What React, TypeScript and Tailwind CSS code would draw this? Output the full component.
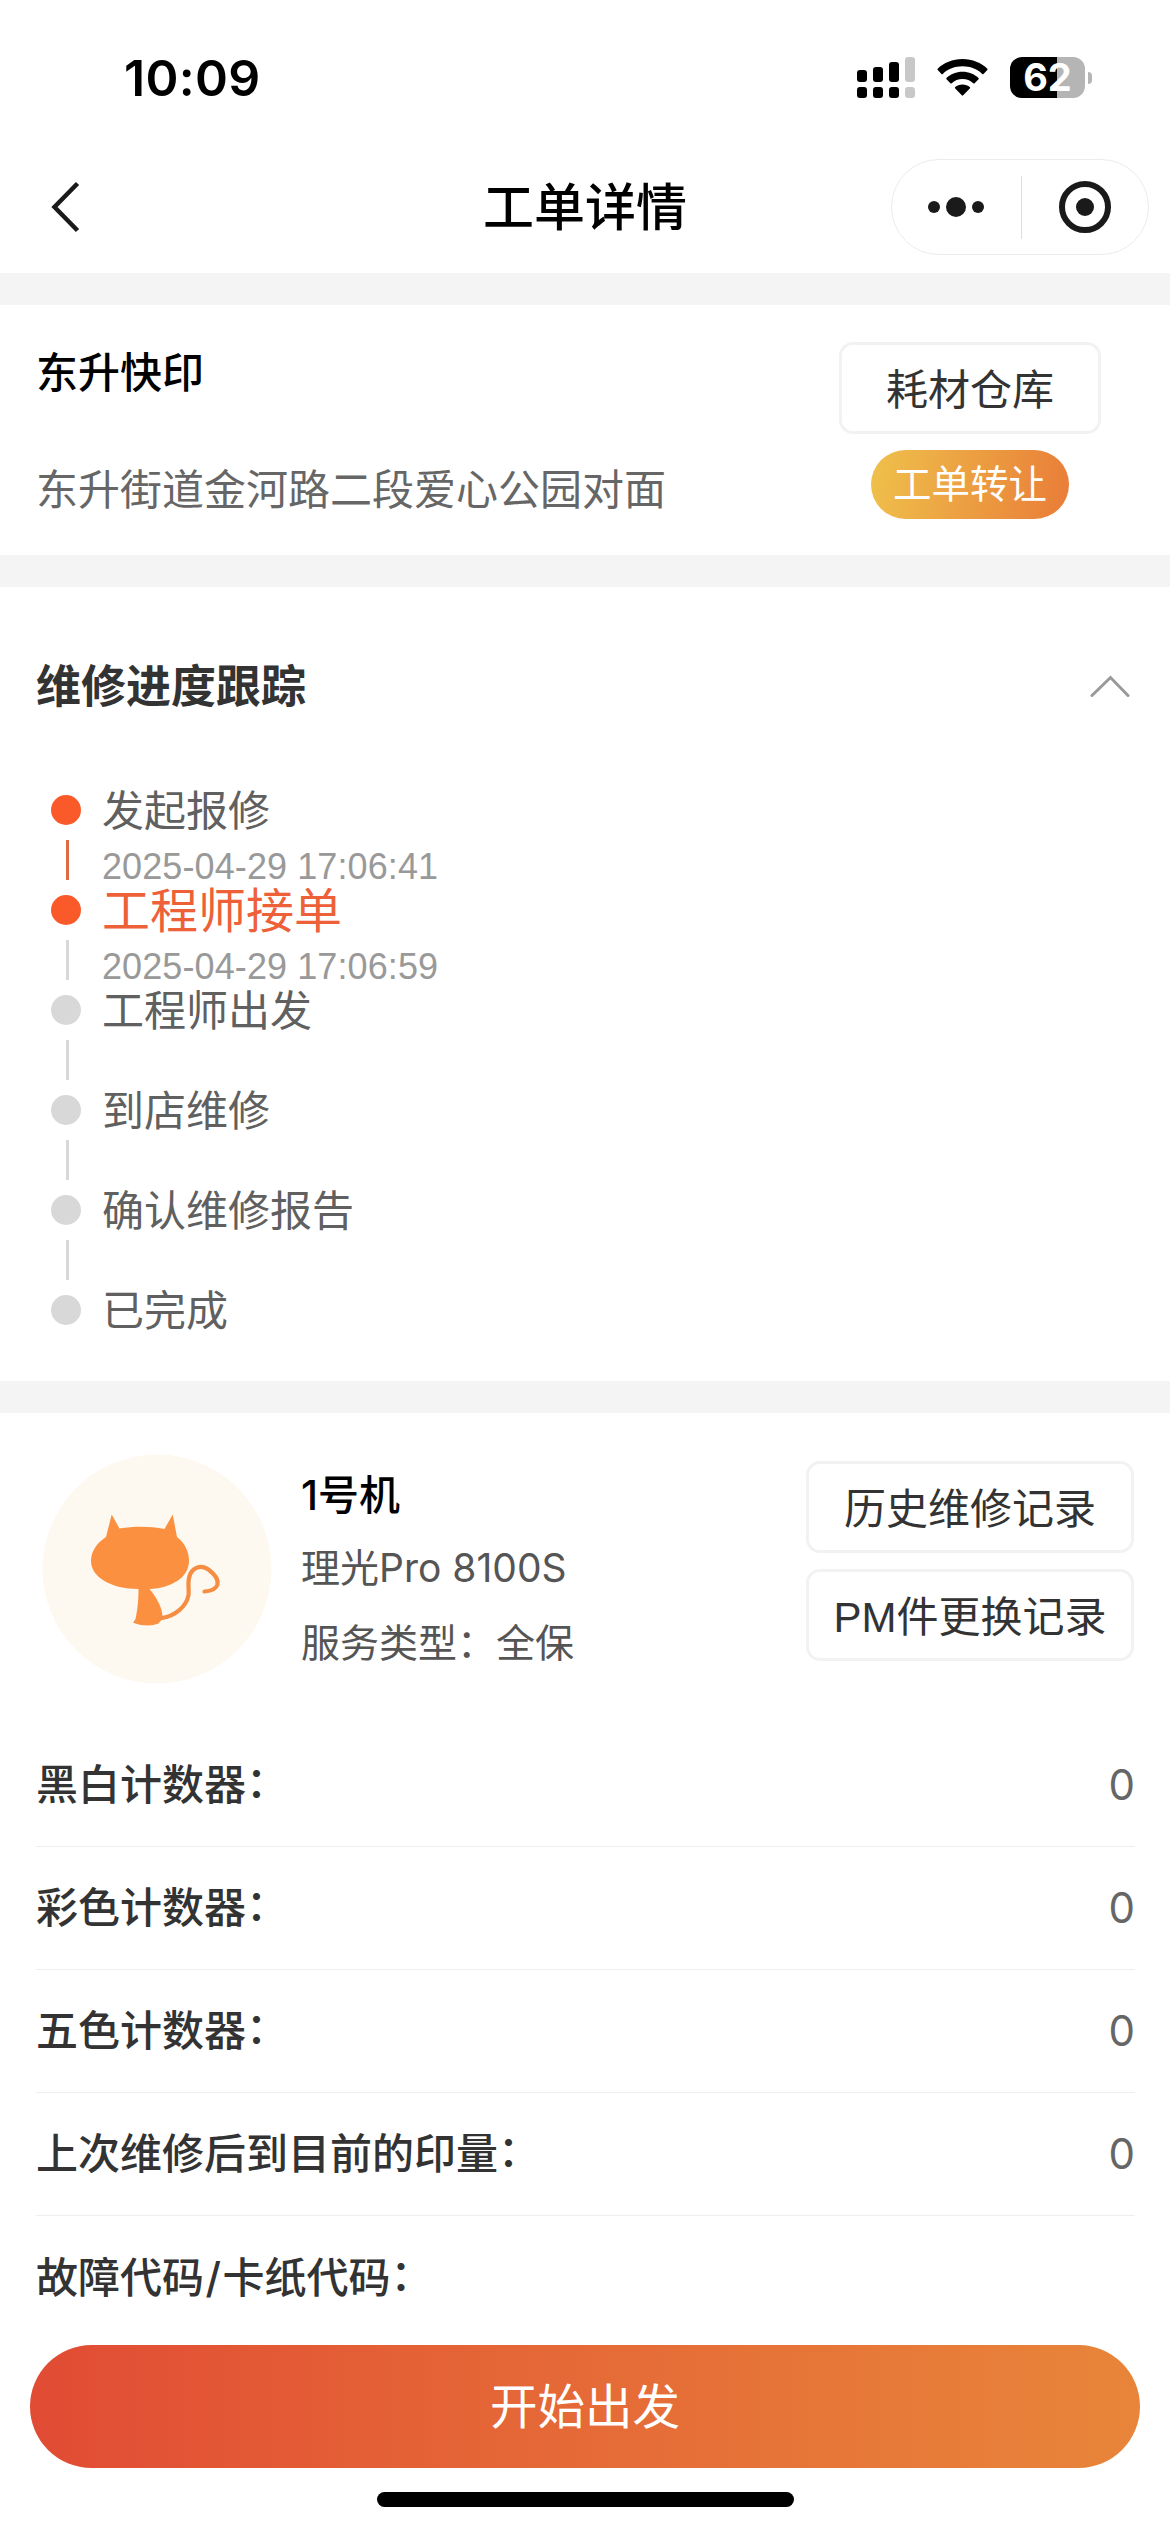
import type { ReactNode } from 'react';

const steps = [
  { label: '发起报修', time: '2025-04-29 17:06:41', done: true, current: false },
  { label: '工程师接单', time: '2025-04-29 17:06:59', done: true, current: true },
  { label: '工程师出发', time: '', done: false, current: false },
  { label: '到店维修', time: '', done: false, current: false },
  { label: '确认维修报告', time: '', done: false, current: false },
  { label: '已完成', time: '', done: false, current: false },
];

const counters = [
  { id: 'black', label: '黑白计数器', value: '0' },
  { id: 'color', label: '彩色计数器', value: '0' },
  { id: 'five', label: '五色计数器', value: '0' },
  { id: 'prints', label: '上次维修后到目前的印量', value: '0' },
  {
    id: 'code',
    label: (
      <>
        故障代码<span className="mx-[1.5px]">/</span>卡纸代码
      </>
    ),
    value: '',
  },
];

const StatusBar = () => (
  <div className="flex h-[159px] items-start justify-between pl-[124px] pr-[78px]">
    <span className="mt-[54px] text-[50px] font-semibold leading-[48px] tracking-[0.3px] text-black">10:09</span>
    <div className="mt-[57px] flex items-start">
      <svg width="58" height="41" viewBox="0 0 58 41">
        <rect x="0" y="13" width="10" height="12" rx="3" />
        <rect x="16" y="10" width="10" height="15" rx="3" />
        <rect x="32" y="5" width="10" height="20" rx="3" />
        <rect x="48" y="0" width="10" height="25" rx="3" fill="#c8c8c8" />
        <rect x="0" y="30" width="10" height="11" rx="3" />
        <rect x="16" y="30" width="10" height="11" rx="3" />
        <rect x="32" y="30" width="10" height="11" rx="3" />
        <rect x="48" y="30" width="10" height="11" rx="3" fill="#c8c8c8" />
      </svg>
      <svg className="ml-[22px]" width="51" height="41" viewBox="0 0 51 41">
        <path d="M25.5 2C35.500 2 44.300 5.900 50.300 11.700Q50.900 12.400 50.300 13L46.500 16.900Q45.900 17.500 45.200 16.900C40 12 33.100 9.300 25.500 9.300S11 12 5.800 16.900Q5.100 17.500 4.500 16.900L.7 13Q.1 12.400 .7 11.700C6.700 5.900 15.500 2 25.500 2Z" />
        <path d="M25.500 14.700C31.900 14.700 37.400 17.100 41.500 20.900Q42.200 21.600 41.500 22.300L37.600 26.200Q37 26.800 36.300 26.200C33.400 23.600 29.700 22 25.500 22S17.600 23.600 14.700 26.200Q14 26.800 13.400 26.200L9.500 22.300Q8.800 21.600 9.500 20.900C13.600 17.100 19.100 14.700 25.500 14.700Z" />
        <path d="M25.500 27.400C28.500 27.400 31 28.500 32.800 30Q33.500 30.700 32.800 31.400L26.200 38.300Q25.500 39 24.800 38.300L18.200 31.400Q17.500 30.700 18.200 30C20 28.500 22.500 27.400 25.500 27.400Z" />
      </svg>
      <div className="ml-[22px] flex h-[41px] w-[75px] items-center justify-center rounded-[12px] bg-linear-to-r from-black from-[62.500%] to-[#b5b5b5] to-[62.500%]">
        <span className="text-[38px] font-bold leading-[41px] text-white">62</span>
      </div>
      <div className="ml-[3px] mt-[15px] h-[12px] w-[4px] rounded-r-full bg-[#b5b5b5]" />
    </div>
  </div>
);

const NavBar = () => (
  <div className="grid h-[114px] grid-cols-3 items-start">
    <svg className="ml-[50px] mt-[21px]" width="32" height="54" viewBox="0 0 32 54" fill="none">
      <path d="M27.500 3.500L4.500 27L27.500 50.500" stroke="#1a1a1a" strokeWidth="4.500" />
    </svg>
    <h1 className="h-[96px] text-center text-[51px] font-medium leading-[98px] text-black">工单详情</h1>
    <div className="mr-[21px] flex h-[96px] w-[258px] items-center justify-self-end rounded-full border border-[#ececec]">
      <div className="flex w-[129px] items-center justify-center gap-[6px]">
        <i className="size-[12px] rounded-full bg-[#1a1a1a]" />
        <i className="size-[20px] rounded-full bg-[#1a1a1a]" />
        <i className="size-[12px] rounded-full bg-[#1a1a1a]" />
      </div>
      <div className="h-[63px] w-px bg-[#dedede]" />
      <div className="flex w-[127px] justify-center">
        <div className="flex size-[52px] items-center justify-center rounded-full border-[6.500px] border-[#1a1a1a]">
          <i className="size-[18px] rounded-full bg-[#1a1a1a]" />
        </div>
      </div>
    </div>
  </div>
);

const OutlineButton = ({ children, wide }: { children: ReactNode; wide?: boolean }) => (
  <button
    className={`h-[92px] rounded-[14px] border-[3px] border-[#f2f2f2] pt-[6px] font-['Liberation_Sans','Noto_Sans_CJK_SC',sans-serif] text-[42px] leading-[80px] text-[#333] ${
      wide ? 'w-[328px]' : 'w-[262px]'
    }`}
  >
    {children}
  </button>
);

const CatAvatar = () => (
  <svg width="230" height="230" viewBox="6 8 230 230">
    <circle cx="121" cy="123" r="114.500" fill="#fef9f0" />
    <path
      d="M75.700 68.500L83.500 82.500C98 80 114 80 128.500 83L136.700 68.500L141 91C149 97 153 106 153 115C153 131 136 142 113.500 143C122 153 127 164 126.500 172C126 174.500 123.500 175.500 122.500 177.500C116 180.500 104 180 97 176.500C98.500 174.500 99.500 174 100 170.500C102 160 102.500 152 102.500 143C75 143 55 131 55 115C55 106 60.500 97 70 91Z"
      fill="#fb9040"
    />
    <path
      d="M126 172C138 170.500 150.500 161 152.500 149C153.500 141 150.500 136 154.500 127.500C158.500 120 167 119 173 124C179 128.500 182.500 133.500 181.500 138.500C180 143.500 175 145 168.500 145.500"
      fill="none"
      stroke="#f58e42"
      strokeWidth="4.200"
      strokeLinecap="round"
    />
  </svg>
);

const Divider = () => <div className="h-[32px] bg-[#f4f4f4]" />;

const App = () => {
  return (
    <div className="flex h-[2532px] w-[1170px] flex-col overflow-hidden bg-white font-['Inter','Noto_Sans_CJK_SC',sans-serif]">
      <StatusBar />
      <NavBar />
      <Divider />

      {/* customer */}
      <section className="flex h-[250px] justify-between pl-[36px] pr-[69px]">
        <div className="pt-[39px]">
          <h2 className="text-[42px] font-medium leading-[58px] text-black">东升快印</h2>
          <p className="mt-[59px] text-[42px] leading-[58px] text-[#666]">东升街道金河路二段爱心公园对面</p>
        </div>
        <div className="flex flex-col items-center pt-[37px]">
          <OutlineButton>耗材仓库</OutlineButton>
          <button className="mt-[16px] h-[69px] w-[198px] rounded-full bg-linear-[100deg,#efc14b,#e97c38] text-[38.500px] leading-[69px] text-white">
            工单转让
          </button>
        </div>
      </section>
      <Divider />

      {/* repair progress */}
      <section className="h-[794px] pl-[36px] pr-[40px]">
        <div className="flex h-[198px] items-center justify-between">
          <h2 className="pt-[2px] text-[45px] font-bold text-[#333]">维修进度跟踪</h2>
          <svg width="40" height="24" viewBox="0 0 40 24" fill="none">
            <path d="M2 21.500L20.500 3.500L38 21.500" stroke="#999" strokeWidth="3" strokeLinecap="round" />
          </svg>
        </div>
        <ul>
          {steps.map((step, i) => (
            <li key={step.label} className="flex h-[100px] pl-[15px]">
              <div className="flex w-[30px] flex-col pt-[10px]">
                <span className={`size-[30px] shrink-0 rounded-full ${step.done ? 'bg-[#fa5a2a]' : 'bg-[#d8d8d8]'}`} />
                {i < steps.length - 1 && (
                  <span className={`ml-[15px] mt-[15px] h-[40px] w-[3px] ${steps[i + 1].done ? 'bg-[#dd6b43]' : 'bg-[#d8d8d8]'}`} />
                )}
              </div>
              <div className="ml-[21px]">
                <p className={`h-[50px] leading-[51px] ${step.current ? 'text-[48px] text-[#ee6038]' : 'text-[42px] text-[#606060]'}`}>
                  {step.label}
                </p>
                <p className="mt-[12px] font-['Liberation_Sans',sans-serif] text-[36px] leading-[40px] tracking-[0.1px] text-[#999]">{step.time}</p>
              </div>
            </li>
          ))}
        </ul>
      </section>
      <Divider />

      {/* machine */}
      <section className="pl-[36px] pr-[35px]">
        <div className="flex h-[311px] pl-[6px] pr-[1px] pt-[41px]">
          <CatAvatar />
          <div className="ml-[29px] flex-1 pt-[12px] text-[39px] leading-[58px] text-[#555]">
            <h3 className="text-[41px] font-medium text-black">1号机</h3>
            <p className="mt-[15px]">理光Pro 8100S</p>
            <p className="mt-[17px]">服务类型：全保</p>
          </div>
          <div className="flex flex-col gap-[16px] pt-[7px]">
            <OutlineButton wide>历史维修记录</OutlineButton>
            <OutlineButton wide>PM件更换记录</OutlineButton>
          </div>
        </div>
        {counters.map((item) => (
          <div key={item.id} className="flex h-[123px] items-center justify-between border-b border-[#eee] text-[42px] leading-[60px] last:border-0">
            <span className="flex font-medium text-[#333]">
              <span>{item.label}</span>
              <span className="-mt-[3px]">：</span>
            </span>
            <span className="text-[#666]">{item.value}</span>
          </div>
        ))}
      </section>

      <footer className="flex flex-col items-center px-[30px] pt-[6px]">
        <button className="h-[123px] w-full rounded-full bg-linear-to-r from-[#e14b34] to-[#e8853a] text-[47.500px] text-white">开始出发</button>
        <div className="mt-[24px] h-[15px] w-[417px] rounded-full bg-black" />
      </footer>
    </div>
  );
};

export default App;
